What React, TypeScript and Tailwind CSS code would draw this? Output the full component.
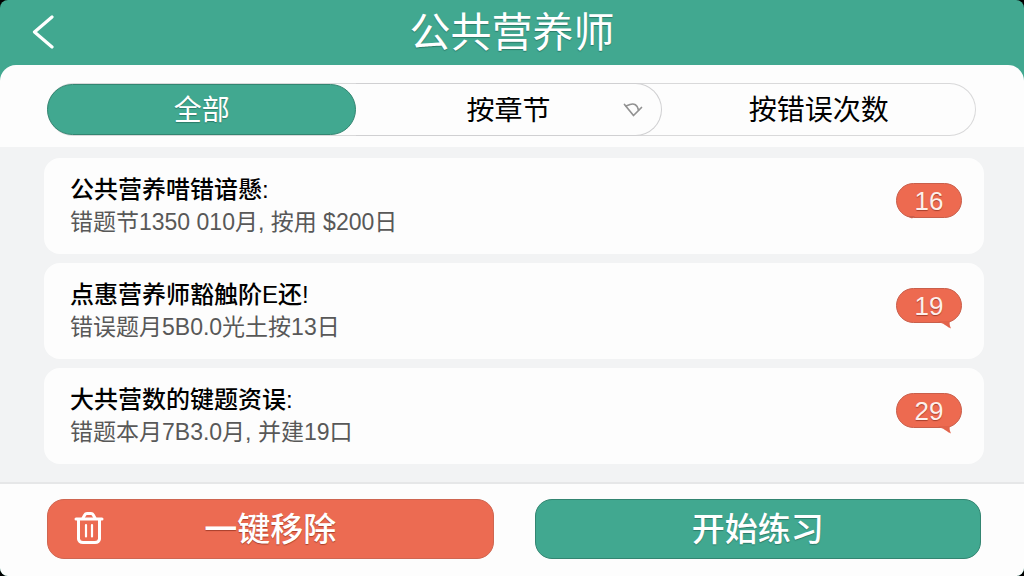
import { useState } from "react";

type Tail = "left" | "right";

const records: { title: string; detail: string; count: number; tail: Tail }[] = [
  { title: "公共营养唶错谙懸:", detail: "错题节1350 010月, 按用 $200日", count: 16, tail: "left" },
  { title: "点惠营养师豁触阶E还!", detail: "错误题月5B0.0光土按13日", count: 19, tail: "right" },
  { title: "大共营数的键题资误:", detail: "错题本月7B3.0月, 并建19口", count: 29, tail: "right" },
];

function CountBadge({ count, tail }: { count: number; tail: Tail }) {
  return (
    <span className="relative mt-[10px] flex h-[35px] w-[66px] shrink-0 items-center justify-center rounded-full border border-[#c95f4b] bg-[#ed6a50] text-[26px] leading-none text-[#fdf0ec] [text-shadow:0_1px_1px_#a8402c]">
      {count}
      {tail === "right" ? (
        <svg className="absolute -bottom-[7px] right-[9px] h-[9px] w-[14px]" viewBox="0 0 14 9" aria-hidden="true">
          <path d="M0 1 H12 C11 4 12 6 13 8.500 C9 7 7 4 2 2.500 Z" fill="#e2634b" />
        </svg>
      ) : (
        <svg className="absolute -bottom-[2px] left-[10px] h-[3px] w-[8px]" viewBox="0 0 8 3" aria-hidden="true">
          <path d="M0 0 H8 L5 2.500 Z" fill="#c95f4b" />
        </svg>
      )}
    </span>
  );
}

export default function App() {
  const [tab, setTab] = useState("all");

  return (
    <div className="bg-black">
      <div className="flex min-h-screen flex-col overflow-hidden rounded-[8px] bg-[#41a890] font-['Liberation_Sans','Noto_Sans_CJK_SC',sans-serif] text-black">
        <header className="grid h-[65px] grid-cols-[1fr_auto_1fr] items-center px-[31px] text-white">
          <button type="button" aria-label="返回" className="w-6">
            <svg className="h-9 w-6" viewBox="0 0 24 36" fill="none" aria-hidden="true">
              <path
                d="M21 2 L3.500 17 L21 32"
                stroke="currentColor"
                strokeWidth="3.200"
                strokeLinecap="round"
                strokeLinejoin="round"
              />
            </svg>
          </button>
          <h1 className="pt-[2px] text-[41px] leading-none [text-shadow:0_1px_1px_#2c7a68]">公共营养师</h1>
        </header>

        <main className="flex flex-1 flex-col overflow-hidden rounded-t-[16px] bg-[#fdfdfd]">
          <div className="pt-[18px] pr-[48px] pb-[11px] pl-[47px]">
            <div className="grid h-[53px] grid-cols-[309fr_305fr_314fr] rounded-full text-[28px] leading-none ring-1 ring-[#d9d9da] ring-inset">
              <button
                type="button"
                onClick={() => setTab("all")}
                aria-pressed={tab === "all"}
                className="my-px rounded-full border border-[#338571] bg-[#41a890] pt-[2px] text-white [text-shadow:0_1px_1px_#2c7a68]"
              >
                全部
              </button>
              <div className="relative rounded-r-full border border-l-0 border-[#d0d0d2]">
                <select
                  aria-label="按章节"
                  value={tab}
                  onChange={(e) => setTab(e.target.value)}
                  className="h-full w-full appearance-none rounded-r-full bg-transparent pt-[2px] text-center"
                >
                  <option value="all">按章节</option>
                </select>
                <svg
                  className="pointer-events-none absolute top-[18px] right-[18px] h-[16px] w-[20px]"
                  viewBox="0 0 20 16"
                  fill="none"
                  stroke="#929292"
                  strokeWidth="1.700"
                  strokeLinecap="round"
                  strokeLinejoin="round"
                  aria-hidden="true"
                >
                  <path d="M1.500 2.500 L10.500 13.500 L18.500 5.500" />
                  <path d="M3 4 L7 2.500 C11 1 14.500 3 15.500 8" />
                </svg>
              </div>
              <button
                type="button"
                onClick={() => setTab("count")}
                aria-pressed={tab === "count"}
                className="pt-[2px]"
              >
                按错误次数
              </button>
            </div>
          </div>

          <ul className="flex flex-1 flex-col gap-[9px] bg-[#f2f3f4] pt-[11px] pr-[40px] pb-[18px] pl-[44px]">
            {records.map((r) => (
              <li
                key={r.title}
                className="flex items-start justify-between rounded-[16px] bg-[#fdfdfd] py-[15px] pr-[22px] pl-[26px] leading-[33px]"
              >
                <div>
                  <h2 className="text-[24px] font-medium">{r.title}</h2>
                  <p className="text-[23px] text-[#585858]">{r.detail}</p>
                </div>
                <CountBadge count={r.count} tail={r.tail} />
              </li>
            ))}
          </ul>

          <footer className="flex gap-[41px] border-t-2 border-[#e6e7e8] pt-[15px] pr-[43px] pb-[17px] pl-[47px] text-[33px] leading-none font-medium text-white">
            <button
              type="button"
              className="relative h-[60px] flex-1 rounded-[17px] border border-[#cf6651] bg-[#ec6b52] [text-shadow:0_1px_1px_#a8402c]"
            >
              <svg
                className="absolute top-[11px] left-[26px] h-[34px] w-[30px]"
                viewBox="0 0 30 34"
                fill="none"
                stroke="currentColor"
                strokeWidth="3"
                strokeLinecap="round"
                strokeLinejoin="round"
                aria-hidden="true"
              >
                <path d="M2 8 H28" />
                <path d="M9 7 L11 3.500 Q11.500 2.500 13 2.500 H17 Q18.500 2.500 19 3.500 L21 7" />
                <path d="M4.500 8.500 V28 Q5 31.500 9 31.500 H21 Q25 31.500 25.500 28 V8.500" />
                <path d="M12 14 V25.500 M18 14 V25.500" strokeWidth="2.200" />
              </svg>
              一键移除
            </button>
            <button
              type="button"
              className="h-[60px] flex-1 rounded-[17px] border border-[#338571] bg-[#41a890] [text-shadow:0_1px_1px_#2c7a68]"
            >
              开始练习
            </button>
          </footer>
        </main>
      </div>
    </div>
  );
}
